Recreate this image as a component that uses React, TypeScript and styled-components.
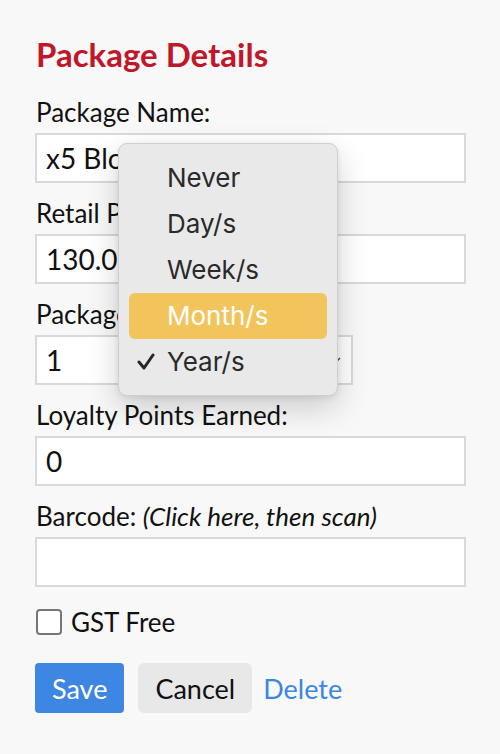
import React from 'react';
import styled, { createGlobalStyle } from 'styled-components';

const GlobalStyle = createGlobalStyle`
  body {
    margin: 0;
    background: #f8f8f8;
    font-family: Lato, "Liberation Sans", sans-serif;
    color: #111;
  }
`;

const Page = styled.div`
  position: relative;
  padding: 34px 34px 40px 35px;
`;

const Title = styled.h1`
  margin: 0 0 23px 1px;
  font-size: 33px;
  line-height: 40px;
  font-weight: 700;
  color: #c0182b;
`;

const Field = styled.div`
  margin-bottom: 15px;
`;

const Label = styled.label`
  display: block;
  margin: 0 0 6px 1px;
  font-size: 26px;
  line-height: 30px;
  color: #111;

  em {
    font-style: italic;
  }
`;

const TextInput = styled.div`
  box-sizing: border-box;
  width: 431px;
  height: 50px;
  padding: 0 9px;
  border: 2px solid #d9d9d9;
  background: #fff;
  font-size: 28px;
  line-height: 46px;
  color: #111;
  white-space: nowrap;
  overflow: hidden;
`;

const SelectBox = styled.div`
  box-sizing: border-box;
  width: 318px;
  height: 50px;
  padding: 0 9px;
  border: 2px solid #d9d9d9;
  background: #fff;
  font-size: 28px;
  line-height: 46px;
  display: flex;
  align-items: center;
  justify-content: space-between;
`;

const CheckRow = styled.label`
  display: flex;
  align-items: center;
  gap: 9px;
  margin: 10px 0 21px 1px;
  font-size: 26px;
  line-height: 40px;
`;

const Box = styled.span`
  box-sizing: border-box;
  width: 26px;
  height: 26px;
  border: 2px solid #767676;
  border-radius: 4px;
  background: #fff;
`;

const Actions = styled.div`
  display: flex;
  align-items: center;
`;

const Button = styled.button<{ primary?: boolean }>`
  height: 50px;
  padding: 0 17px;
  margin-right: ${(p) => (p.primary ? '14px' : '11px')};
  border: none;
  border-radius: ${(p) => (p.primary ? '4px' : '6px')};
  background: ${(p) => (p.primary ? '#3d86e2' : '#e8e8e8')};
  color: ${(p) => (p.primary ? '#fff' : '#111')};
  font-family: Lato, "Liberation Sans", sans-serif;
  font-size: 27px;
`;

const LinkButton = styled.a`
  font-size: 27px;
  color: #3d86e2;
  text-decoration: none;
`;

const Menu = styled.div`
  position: absolute;
  left: 118px;
  top: 143px;
  width: 220px;
  box-sizing: border-box;
  padding: 11px 10px 10px;
  background: #e9e9e9;
  border: 1px solid #cfcfcf;
  border-radius: 9px;
  box-shadow: 0 12px 32px rgba(0, 0, 0, 0.18), 0 2px 6px rgba(0, 0, 0, 0.08);
  font-family: Inter, "Open Sans", sans-serif;
`;

const MenuItem = styled.div<{ active?: boolean }>`
  position: relative;
  height: 46px;
  padding-left: 38px;
  border-radius: 6px;
  background: ${(p) => (p.active ? '#f2c45c' : 'transparent')};
  color: ${(p) => (p.active ? '#fff' : '#2a2a2a')};
  font-size: 26px;
  line-height: 46px;
`;

const Tick = styled.span`
  position: absolute;
  left: 8px;
  top: 0;
`;

const options = ['Never', 'Day/s', 'Week/s', 'Month/s', 'Year/s'];

const App: React.FC = () => (
  <Page>
    <GlobalStyle />
    <Title>Package Details</Title>

    <Field>
      <Label>Package Name:</Label>
      <TextInput>x5 Block Membership</TextInput>
    </Field>

    <Field>
      <Label>Retail Price:</Label>
      <TextInput>130.00</TextInput>
    </Field>

    <Field>
      <Label>Package Expires Every:</Label>
      <SelectBox>
        <span>1</span>
        <svg width="14" height="10" viewBox="0 0 14 10">
          <path d="M2 3 L7 8 L12 3" fill="none" stroke="#555" strokeWidth="1.6" />
        </svg>
      </SelectBox>
    </Field>

    <Field>
      <Label>Loyalty Points Earned:</Label>
      <TextInput>0</TextInput>
    </Field>

    <Field>
      <Label>
        Barcode:
        {' '}
        <em>(Click here, then scan)</em>
      </Label>
      <TextInput />
    </Field>

    <CheckRow>
      <Box />
      GST Free
    </CheckRow>

    <Actions>
      <Button primary>Save</Button>
      <Button>Cancel</Button>
      <LinkButton href="#">Delete</LinkButton>
    </Actions>

    <Menu>
      {options.map((o) => (
        <MenuItem key={o} active={o === 'Month/s'}>
          {o === 'Year/s' && (
            <Tick>
              <svg width="18" height="46" viewBox="0 0 18 46">
                <path d="M2 23 L7 29 L16 16" fill="none" stroke="#262626" strokeWidth="3" strokeLinecap="round" strokeLinejoin="round" />
              </svg>
            </Tick>
          )}
          {o}
        </MenuItem>
      ))}
    </Menu>
  </Page>
);

export default App;
